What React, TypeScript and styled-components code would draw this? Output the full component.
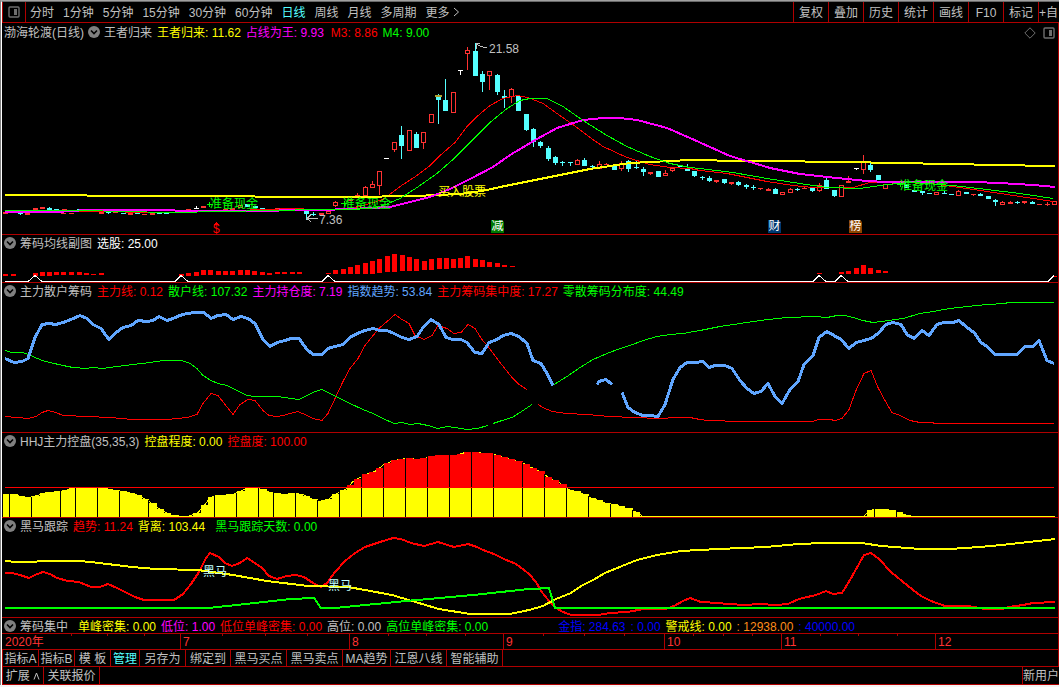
import React from "react";
import styled, { createGlobalStyle, css } from "styled-components";

const C = {
  line: "#b00000",
  text: "#c0c0c0",
  white: "#ffffff",
  red: "#ff0000",
  candle: "#ff3232",
  cyan: "#54ffff",
  green: "#00ff00",
  yellow: "#ffff00",
  magenta: "#ff00ff",
  blue: "#60a6ff",
  deep: "#0000ff",
  orange: "#ff8c1a",
  dim: "#6e6e6e",
};

const GlobalStyle = createGlobalStyle`
  * { box-sizing: border-box; }
  body { margin: 0; background: #f4f4f4; }
  button { font: inherit; color: inherit; background: none; border: 0; padding: 0; cursor: pointer; }
`;

const Frame = styled.div`
  border-top: 1px solid #a0a0a0;
  border-left: 1px solid #808080;
  overflow: hidden;
  font: 12px/16px "Liberation Sans", "Noto Sans CJK SC", sans-serif;
  color: ${C.text};
`;

const Screen = styled.div`
  border-top: 1px solid #696969;
  border-left: 1px solid #ffffff;
  background: #000;
`;

const Toolbar = styled.nav`
  display: flex;
  height: 21px;
  border-left: 1px solid ${C.line};
  border-bottom: 1px solid ${C.line};
  overflow: hidden;
`;

const LayoutButton = styled.button`
  flex: none;
  width: 23px;
  border-right: 1px solid ${C.line};
  display: flex;
  align-items: center;
  justify-content: center;
`;

const Periods = styled.div`
  flex: 1;
  display: flex;
  gap: 9px;
  padding-left: 4px;
  overflow: hidden;
`;

const PeriodButton = styled.button<{ $active?: boolean }>`
  padding-top: 2px;
  white-space: nowrap;
  color: ${(p) => (p.$active ? C.cyan : C.text)};
`;

const Tools = styled.div`
  display: flex;
  flex: none;
`;

const ToolButton = styled.button<{ $narrow?: boolean }>`
  width: ${(p) => (p.$narrow ? 21 : 35)}px;
  padding-top: 2px;
  border-left: 1px solid ${C.line};
  white-space: nowrap;
  overflow: hidden;
  ${(p) => p.$narrow && css`text-align: left;`}
`;

const Panels = styled.main`
  border-right: 1px solid ${C.line};
`;

const Panel = styled.section`
  border-bottom: 1px solid ${C.line};
`;

const PanelHeader = styled.header<{ $tall?: boolean }>`
  display: flex;
  align-items: center;
  height: ${(p) => (p.$tall ? 18 : 16)}px;
  padding: 0 3px 0 2px;
  gap: 5px;
  white-space: nowrap;
  overflow: hidden;
`;

const PanelTitle = styled.div`
  display: flex;
  align-items: center;
  gap: 4px;
`;

const Label = styled.span`
  padding-top: 2px;
`;

const Collapse = styled.button`
  display: flex;
  width: 12px;
  height: 12px;
`;

const Reading = styled(Label)<{ $color: string; $before?: number }>`
  color: ${(p) => p.$color};
  margin-left: ${(p) => p.$before ?? 0}px;
`;

const HeaderIcons = styled.div`
  display: flex;
  gap: 7px;
  margin-left: auto;
  padding-top: 1px;
`;

const IconButton = styled.button`
  display: flex;
`;

const ChartArea = styled.div`
  position: relative;
`;

const Chart = styled.svg<{ $height: number }>`
  display: block;
  width: 100%;
  height: ${(p) => p.$height}px;
  shape-rendering: crispEdges;
`;

const Mark = styled.span<{ $x: number; $y: number; $color: string }>`
  position: absolute;
  left: ${(p) => ((p.$x - 2) / 1056) * 100}%;
  top: ${(p) => p.$y}px;
  color: ${(p) => p.$color};
  line-height: 14px;
  white-space: nowrap;
`;

const Badge = styled(Mark)<{ $bg: string }>`
  width: 13px;
  height: 13px;
  line-height: 13px;
  text-align: center;
  background: ${(p) => p.$bg};
  clip-path: polygon(0 0, 11px 0, 13px 2px, 13px 13px, 0 13px);
`;

const Axis = styled.div`
  position: relative;
  display: grid;
  grid-template-columns: 178fr 169fr 154fr 161fr 117fr 154fr 123fr;
  height: 16px;
  border-bottom: 1px solid ${C.line};
  color: ${C.candle};
`;

const Month = styled.span`
  border-left: 1px solid ${C.line};
  padding-left: 2px;
  &:first-child { border-left: 0; padding-left: 3px; }
`;

const Ticks = styled.svg`
  position: absolute;
  inset: 0;
  width: 100%;
  height: 2px;
  shape-rendering: crispEdges;
`;

const Bar = styled.div<{ $height: number }>`
  display: flex;
  height: ${(p) => p.$height}px;
  border-bottom: 1px solid ${C.line};
  overflow: hidden;
`;

const Tab = styled.button<{ $width: number; $active?: boolean }>`
  flex: none;
  width: ${(p) => p.$width}px;
  padding-top: 1px;
  border-left: 1px solid ${C.line};
  white-space: nowrap;
  overflow: hidden;
  color: ${(p) => (p.$active ? C.cyan : C.text)};
`;

const TabEnd = styled.div`
  border-left: 1px solid ${C.line};
  flex: 1;
`;

type Pt = [number, number];

/* Section scaling: values are recorded on an enlarged grid and mapped back to plot units. */
const place = (ox: number, oy: number, pts: Pt[], sx = 3): Pt[] =>
  pts.map(([x, y]) => [Math.round(ox + x / sx), Math.round(oy + y / 3)]);

const WIDE = 2.958;

const Curve = ({ pts, color, w = 1 }: { pts: Pt[]; color: string; w?: number }) => (
  <polyline
    points={pts.map(([x, y]) => `${x},${w % 2 ? y + 0.5 : y}`).join(" ")}
    fill="none"
    stroke={color}
    strokeWidth={w}
    strokeLinejoin="round"
    vectorEffect="non-scaling-stroke"
  />
);

/* ---------- price chart ---------- */

const priceYellow: Pt[] = [
  [5, 195], [86, 195], [88, 196], [254, 196], [256, 197], [350, 197], [415, 196], [437, 195], [460, 194], [475, 192],
  [487, 190], [500, 187], [515, 184], [530, 181], [550, 177], [570, 173], [590, 169], [610, 166], [630, 163], [650, 162],
  [670, 161], [690, 160], [716, 160], [718, 161], [804, 161], [806, 162], [870, 162], [872, 163], [922, 163], [924, 164],
  [973, 164], [975, 165], [1024, 165], [1026, 166], [1055, 166],
];
const priceMagenta: Pt[] = [
  [5, 212], [57, 212], [86, 210], [174, 210], [176, 211], [240, 211], [320, 210], [350, 209], [370, 208], [390, 207],
  [410, 202], [430, 197], [450, 189], [470, 179], [493, 167], [510, 155], [537, 139], [557, 128], [570, 124], [583, 120],
  [603, 118], [620, 118], [637, 120], [667, 128], [690, 138], [710, 147], [730, 156], [750, 162], [770, 168], [800, 174],
  [827, 177], [867, 181], [887, 182], [933, 182], [973, 182], [1000, 183], [1033, 185], [1055, 187],
];
const priceRed: Pt[] = [
  [5, 211], [100, 211], [150, 212], [222, 211], [240, 210], [260, 209], [300, 208], [315, 210], [330, 210], [350, 208],
  [363, 205], [383, 199], [400, 186], [417, 175], [430, 165], [440, 155], [455, 142], [467, 126], [477, 116], [490, 105],
  [503, 98], [517, 95], [528, 97], [543, 103], [557, 113], [577, 127], [590, 137], [603, 146], [627, 157], [650, 164],
  [670, 167], [690, 168], [700, 170], [727, 173], [767, 181], [793, 185], [813, 187], [853, 187], [870, 182], [900, 182],
  [930, 183], [967, 188], [1007, 194], [1053, 201],
];
const priceGreen: Pt[] = [
  [5, 210], [86, 210], [120, 211], [174, 212], [222, 211], [320, 209], [350, 209], [370, 208], [383, 205], [400, 198],
  [417, 187], [437, 173], [453, 159], [470, 142], [490, 122], [507, 108], [520, 100], [530, 98], [547, 98], [563, 106],
  [583, 120], [607, 135], [627, 146], [650, 156], [670, 163], [690, 167], [700, 168], [733, 172], [767, 178], [800, 183],
  [827, 187], [860, 188], [887, 184], [913, 182], [953, 185], [987, 189], [1020, 193], [1053, 198],
];

/* kind, x, body top, body bottom, high, low — r hollow up, R solid up, c down, w flat */
type Candle = [string, number, number, number, number?, number?];

const candlesA: Candle[] = [
  ["R", 16, 247, 251], ["R", 31, 247, 250], ["c", 61, 250, 253, 250, 256], ["R", 82, 250, 254], ["r", 106, 235, 240],
  ["R", 127, 232, 236], ["c", 148, 234, 241, 231], ["c", 170, 237, 240], ["R", 193, 237, 240], ["R", 190, 249, 253],
  ["R", 213, 249, 252], ["c", 238, 237, 240], ["r", 304, 246, 253], ["c", 325, 246, 249, 246, 252],
  ["R", 346, 245, 250], ["c", 370, 250, 253], ["R", 391, 249, 254], ["c", 412, 250, 253], ["R", 432, 251, 254],
  ["R", 457, 249, 254], ["c", 478, 249, 252], ["c", 499, 249, 252], ["c", 520, 246, 249], ["R", 565, 237, 240],
  ["w", 588, 234, 237, 228], ["r", 610, 227, 235], ["R", 675, 237, 241], ["R", 698, 234, 240], ["r", 720, 226, 235],
  ["c", 742, 222, 232], ["c", 765, 229, 235], ["c", 787, 235, 238], ["R", 832, 235, 238], ["R", 853, 234, 237],
  ["R", 875, 234, 237], ["R", 895, 235, 238], ["c", 919, 243, 252, 243, 270], ["c", 940, 252, 255, 247, 259],
  ["r", 964, 248, 256], ["r", 985, 243, 251], ["r", 1006, 216, 227, 212, 231], ["r", 1050, 206, 214],
  ["R", 1072, 195, 198, 189, 202],
];
const candlesB: Candle[] = [
  ["r", 46, 471, 497, 468], ["r", 67, 462, 473, 453], ["r", 88, 423, 467, 423, 495], ["w", 110, 384, 387],
  ["r", 134, 336, 360, 336, 365], ["c", 154, 315, 348, 288, 387], ["r", 178, 300, 362], ["c", 199, 312, 353, 306],
  ["r", 220, 306, 339, 306, 357], ["r", 245, 252, 278], ["c", 265, 198, 210, 192, 282], ["c", 286, 210, 242, 147],
  ["r", 310, 186, 248], ["w", 330, 120, 123, 120, 135], ["r", 352, 60, 72, 51, 120], ["c", 376, 63, 138, 39],
  ["c", 397, 132, 156, 123, 186], ["r", 418, 123, 138, 123, 180], ["c", 442, 135, 186, 132, 195],
  ["c", 463, 198, 204, 180, 234], ["r", 484, 177, 200, 174, 218], ["c", 505, 198, 243], ["c", 529, 252, 300, 252, 303],
  ["c", 550, 297, 336, 294, 350], ["c", 571, 336, 347, 333, 354], ["c", 595, 354, 387, 348, 392],
  ["c", 616, 381, 399, 378, 404], ["c", 637, 397, 400, 393, 407], ["c", 661, 396, 399, 396, 408],
  ["r", 682, 391, 404, 386], ["c", 703, 390, 408, 384], ["c", 727, 407, 412, 405, 418], ["r", 748, 402, 416, 393],
  ["R", 769, 402, 405, 399], ["c", 793, 408, 420], ["r", 814, 400, 416, 394, 423], ["c", 835, 393, 417, 390, 425],
  ["c", 858, 411, 414, 390, 417], ["c", 880, 417, 426, 411, 437], ["R", 901, 426, 432, 426, 435],
  ["c", 925, 423, 441], ["r", 946, 428, 438, 420], ["r", 967, 414, 423, 414, 426], ["c", 991, 409, 412],
  ["c", 1012, 414, 423, 402], ["c", 1033, 423, 438, 423, 441],
];
const candlesC: Candle[] = [
  ["c", 7, 141, 144, 137, 149], ["c", 28, 144, 153, 138, 156], ["R", 49, 150, 155, 150, 159], ["c", 73, 147, 159, 147, 162],
  ["R", 94, 156, 161, 156, 165], ["c", 115, 156, 164, 153, 168], ["c", 139, 165, 170, 162, 176],
  ["c", 160, 171, 174, 165, 180], ["R", 181, 174, 177, 174, 180], ["R", 205, 177, 183, 174], ["c", 226, 177, 192, 174],
  ["r", 247, 186, 195], ["r", 271, 177, 189, 174], ["c", 292, 177, 180, 174, 183], ["R", 313, 174, 177, 168],
  ["c", 337, 173, 183, 173, 186], ["r", 358, 166, 182, 160, 186], ["c", 379, 150, 177, 140], ["c", 403, 180, 198, 180, 201],
  ["r", 424, 166, 200], ["R", 445, 153, 158, 138], ["w", 468, 114, 117, 114, 120], ["r", 490, 96, 120, 75, 132],
  ["c", 511, 105, 120, 99, 126], ["c", 535, 135, 150], ["r", 556, 162, 177], ["R", 577, 157, 160, 154, 165],
  ["c", 620, 162, 174], ["c", 643, 180, 185], ["c", 667, 183, 189, 183, 194], ["c", 688, 189, 192], ["r", 709, 186, 195],
  ["c", 733, 189, 192, 183], ["c", 754, 192, 195], ["r", 775, 183, 198, 180], ["c", 799, 186, 192], ["R", 820, 192, 195, 192, 198],
  ["c", 841, 192, 198, 189], ["c", 865, 198, 207], ["c", 886, 210, 215, 207, 228], ["r", 907, 216, 225, 213],
  ["R", 931, 216, 221, 213], ["c", 952, 216, 219, 213, 222], ["R", 973, 213, 219, 213, 222], ["c", 997, 216, 222, 213],
  ["R", 1017, 222, 225], ["R", 1042, 222, 225, 216, 228], ["r", 1063, 213, 225],
];

const Candles = ({ ox, oy, data }: { ox: number; oy: number; data: Candle[] }) => (
  <g>
    {data.map(([k, cx, t, b, hi = t, lo = b], i) => {
      const x = Math.round(ox + (cx - 1.5) / 3);
      const [top, bot, h, l] = [t, b, hi, lo].map((v) => Math.round(oy + v / 3));
      const color = k === "c" ? C.cyan : k === "w" ? C.white : C.candle;
      const bh = Math.max(1, bot - top);
      return (
        <g key={i} fill={color}>
          {h < top && <rect x={x} y={h} width={1} height={top - h} />}
          {l > bot && <rect x={x} y={bot} width={1} height={l - bot} />}
          {k === "r" && bh > 2 ? (
            <rect x={x - 1.5} y={top + 0.5} width={4} height={bh - 1} fill="none" stroke={color} />
          ) : (
            <rect x={x - 2} y={top} width={5} height={bh} />
          )}
        </g>
      );
    })}
  </g>
);

/* ---------- chip histogram ---------- */

const histA: [number, number, number][] = [
  [16, 432, 438], [40, 432, 438], [106, 430, 438], [127, 426, 438], [148, 426, 438], [169, 427, 436], [190, 426, 435],
  [213, 426, 435], [238, 426, 435], [259, 429, 435], [280, 432, 435], [304, 429, 435], [544, 433, 438], [565, 430, 438],
  [589, 426, 438], [610, 420, 435], [631, 420, 435], [655, 423, 435], [676, 423, 435], [697, 423, 435], [721, 420, 435],
  [742, 420, 435], [763, 423, 435], [787, 426, 435], [808, 429, 435], [832, 426, 432], [853, 426, 432], [877, 426, 432],
  [898, 426, 432], [985, 429, 432], [1006, 420, 432], [1030, 417, 432], [1051, 411, 432], [1072, 405, 432],
  [1096, 399, 432], [1117, 393, 432], [1138, 387, 429], [1162, 378, 426], [1183, 372, 426], [1207, 375, 423],
  [1228, 381, 423], [1249, 387, 423], [1271, 393, 420], [1294, 387, 420], [1316, 384, 417], [1337, 384, 417],
  [1360, 387, 414], [1381, 384, 414], [1402, 378, 414], [1426, 387, 411], [1447, 390, 411], [1468, 396, 411],
  [1492, 399, 411], [1513, 405, 411], [1537, 408, 411], [2458, 429, 432], [2524, 426, 432], [2545, 423, 432],
  [2569, 414, 432], [2590, 405, 432], [2611, 414, 432], [2635, 420, 429], [2656, 423, 429], [3163, 438, 441],
];
const chipBase: Pt[] = [
  [5, 281], [28, 281], [35, 275], [42, 281], [175, 281], [181, 275], [188, 281], [322, 281], [328, 275], [335, 281],
  [813, 281], [819, 275], [826, 281], [835, 281], [841, 275], [848, 281], [1048, 281], [1054, 275],
];

/* ---------- main force / retail ---------- */

const trend1: Pt[] = [
  ...place(0, 280, [
    [15, 235], [42, 247], [65, 243], [84, 234], [104, 172], [125, 133], [148, 129], [168, 133], [190, 126], [213, 118],
    [240, 105], [260, 113], [280, 133], [303, 145], [326, 176], [345, 158], [370, 142], [392, 136], [413, 121], [440, 124],
    [460, 120], [478, 109], [500, 121], [520, 115], [540, 104], [560, 100], [585, 97], [611, 97], [632, 113], [655, 106],
    [678, 103], [698, 116], [722, 109], [745, 113], [766, 130], [788, 178], [811, 199], [832, 187], [855, 180], [872, 173],
    [898, 173], [920, 208], [940, 223], [965, 223], [985, 205], [1005, 198], [1028, 191], [1050, 171],
  ]),
  ...place(350, 280, [
    [20, 158], [45, 151], [68, 145], [90, 151], [112, 149], [132, 160], [155, 172], [178, 178], [200, 169], [220, 140],
    [244, 118], [267, 133], [288, 170], [310, 178], [333, 178], [352, 187], [376, 215], [397, 220], [418, 187], [442, 178],
    [460, 164], [482, 159], [508, 169], [530, 190], [550, 240], [572, 250], [590, 280], [610, 314],
  ]),
];
const trend2 = place(350, 280, [[740, 313], [748, 303], [768, 297], [786, 313]]);
const trend3: Pt[] = [
  ...place(350, 280, [
    [817, 337], [835, 380], [855, 395], [878, 405], [900, 406], [924, 409], [946, 373], [968, 298], [990, 260],
    [1012, 247], [1035, 247],
  ]),
  ...place(700, 280, [
    [10, 243], [28, 260], [45, 256], [75, 256], [95, 265], [120, 300], [140, 325], [163, 338], [182, 333], [204, 310],
    [225, 347], [247, 368], [270, 328], [293, 304], [312, 252], [340, 225], [358, 170], [380, 154], [402, 166], [424, 176],
    [446, 205], [468, 185], [492, 181], [512, 175], [535, 158], [558, 133], [580, 127], [602, 132], [622, 163], [643, 175],
    [667, 151], [688, 166], [710, 133], [733, 125], [760, 125], [776, 121], [800, 140], [822, 157], [843, 185], [862, 197],
    [886, 223], [950, 223], [975, 199], [1000, 199], [1018, 181], [1042, 240], [1063, 248],
  ]),
];
const retail1: Pt[] = [
  ...place(0, 280, [
    [15, 211], [35, 217], [70, 217], [100, 228], [125, 240], [150, 245], [190, 256], [220, 260], [258, 265], [280, 262],
    [310, 265], [350, 259], [400, 252], [450, 245], [490, 239], [547, 239], [570, 250], [590, 263], [610, 285], [632, 301],
    [655, 308], [680, 315], [710, 330], [740, 345], [765, 349], [800, 347], [830, 349], [898, 358], [920, 345], [945, 333],
    [965, 327], [985, 335], [1020, 354], [1050, 370],
  ]),
  ...place(350, 280, [
    [40, 388], [70, 399], [100, 415], [133, 430], [155, 427], [180, 433], [205, 430], [235, 436], [265, 444], [290, 439],
    [315, 440], [352, 448], [380, 444], [415, 435],
  ]),
];
const retail2 = place(350, 280, [[430, 430], [455, 420], [485, 410], [510, 397], [545, 373]]);
const retail3: Pt[] = [
  ...place(350, 280, [
    [613, 312], [650, 287], [690, 260], [730, 237], [770, 218], [810, 205], [840, 194], [880, 180], [920, 169],
    [960, 161], [1000, 159],
  ]),
  ...place(700, 280, [
    [0, 149], [60, 137], [120, 129], [180, 121], [260, 110], [345, 107], [380, 110], [410, 106], [435, 106], [460, 112],
    [490, 121], [520, 125], [545, 123], [610, 114], [660, 100], [700, 92], [750, 84], [800, 79], [860, 71], [915, 70],
    [925, 67], [1061, 67],
  ]),
];
const force1: Pt[] = [
  ...place(0, 280, [
    [15, 409], [50, 412], [85, 415], [108, 408], [125, 396], [145, 391], [168, 396], [190, 406], [265, 407], [330, 411],
    [400, 417], [500, 418], [560, 412], [590, 403], [610, 370], [632, 340], [655, 346], [675, 373], [698, 403], [720, 372],
    [745, 358], [766, 359], [788, 390], [808, 405], [830, 409], [850, 405], [870, 399], [895, 394], [920, 405], [940, 415],
    [965, 421], [985, 400], [1005, 355], [1030, 303], [1050, 263],
  ]),
  ...place(350, 280, [
    [25, 235], [45, 195], [70, 165], [90, 140], [112, 122], [135, 103], [155, 118], [178, 130], [195, 165], [222, 176],
    [245, 166], [265, 136], [290, 144], [312, 160], [333, 157], [353, 133], [376, 143], [397, 178], [415, 198], [450, 245],
    [485, 292], [508, 312], [530, 328],
  ]),
];
const force2: Pt[] = [
  ...place(350, 280, [
    [565, 373], [580, 382], [605, 393], [650, 399], [710, 402], [780, 407], [850, 411], [930, 415], [980, 412], [1020, 412],
  ]),
  ...place(700, 280, [
    [0, 418], [20, 421], [125, 422], [135, 424], [340, 424], [355, 418], [390, 418], [405, 421], [425, 414], [446, 387],
    [468, 330], [492, 280], [512, 269], [535, 320], [555, 360], [577, 396], [600, 405], [630, 421], [660, 426], [695, 427],
    [705, 430], [1061, 430],
  ]),
];

/* ---------- control degree ---------- */

const control: Pt[] = [
  ...place(0, 430, [
    [9, 192], [40, 192], [62, 198], [85, 201], [110, 195], [140, 186], [180, 182], [220, 175], [245, 173], [285, 175],
    [310, 174], [340, 179], [380, 187], [410, 194], [440, 213], [470, 235], [500, 252], [520, 259], [555, 259], [585, 245],
    [605, 222], [620, 201], [650, 196], [690, 192], [715, 180], [735, 172], [765, 174], [790, 182], [815, 189], [840, 191],
    [870, 189], [895, 192], [920, 205], [945, 213], [970, 206], [990, 192], [1025, 174], [1045, 153], [1080, 133],
    [1110, 122], [1135, 102], [1165, 89], [1200, 85], [1245, 87], [1275, 78], [1310, 75], [1350, 74], [1375, 67],
    [1410, 66], [1460, 72], [1490, 80], [1520, 89], [1550, 100],
  ], WIDE),
  ...place(529, 430, [
    [0, 108], [20, 117], [42, 130], [62, 143], [88, 157], [108, 170], [115, 176], [150, 187], [180, 202], [220, 215],
    [260, 226], [300, 238], [325, 248], [337, 258], [990, 258], [1002, 243], [1020, 238], [1060, 238], [1085, 242],
    [1110, 252], [1130, 258], [1553, 258],
  ], WIDE),
];
const valueAt = (pts: Pt[], x: number) => {
  for (let i = 1; i < pts.length; i++) {
    const [x0, y0] = pts[i - 1];
    const [x1, y1] = pts[i];
    if (x <= x1) return x1 === x0 ? y1 : y0 + ((y1 - y0) * Math.max(0, x - x0)) / (x1 - x0);
  }
  return pts[pts.length - 1][1];
};
const controlBars = Array.from({ length: 144 }, (_, i) => {
  const x = Math.round(3 + i * 7.32);
  return { x, w: Math.min(1055, Math.round(3 + (i + 1) * 7.32)) - x, y: Math.round(valueAt(control, x + 3)) };
});
const gaps = [
  9, 31, 60, 75, 97, 119, 148, 214, 236, 258, 273, 295, 317, 339, 361, 383, 405, 427, 449, 471, 493, 522, 544, 566, 588,
  610, 632, 874, 896,
];

/* ---------- dark horse ---------- */

const horseRed: Pt[] = [
  ...place(0, 430, [
    [15, 429], [35, 429], [60, 436], [85, 444], [105, 436], [126, 427], [148, 432], [170, 445], [200, 453], [235, 457],
    [270, 471], [295, 470], [320, 463], [345, 473], [370, 487], [400, 500], [425, 510], [515, 510], [540, 493], [565, 462],
    [590, 427], [608, 385], [622, 370], [648, 380], [665, 398], [687, 408], [710, 400], [732, 385], [755, 398], [775, 415],
    [795, 437], [820, 447], [850, 438], [875, 434], [900, 442], [925, 460], [950, 470], [968, 460], [990, 425], [1020, 392],
    [1050, 368], [1080, 350], [1125, 337], [1162, 323], [1185, 326], [1215, 340], [1255, 349], [1297, 337], [1342, 352],
    [1384, 341], [1410, 350], [1430, 361], [1460, 372], [1490, 386], [1525, 402], [1550, 420],
  ], WIDE),
  ...place(529, 430, [
    [0, 432], [20, 455], [35, 483], [60, 513], [80, 533], [100, 547], [125, 555], [205, 554], [240, 548], [290, 545],
    [340, 538], [405, 537], [430, 527], [455, 512], [475, 505], [510, 515], [560, 518], [590, 522], [640, 525], [680, 521],
    [730, 525], [765, 523], [800, 508], [850, 494], [880, 484], [900, 492], [925, 490], [950, 450], [990, 376],
    [1012, 370], [1035, 387], [1070, 425], [1120, 467], [1160, 497], [1190, 514], [1230, 527], [1300, 528], [1350, 537],
    [1400, 537], [1420, 531], [1460, 526], [1490, 519], [1556, 516],
  ], WIDE),
];
const horseYellow: Pt[] = [
  ...place(0, 430, [
    [15, 393], [50, 396], [95, 396], [125, 393], [235, 393], [270, 397], [390, 412], [460, 418], [585, 421], [690, 434],
    [790, 454], [910, 467], [1030, 470], [1080, 480], [1160, 495], [1220, 514], [1300, 536], [1390, 552], [1510, 551],
  ], WIDE),
  ...place(529, 430, [
    [0, 540], [40, 527], [80, 508], [125, 490], [155, 468], [190, 449], [225, 428], [275, 407], [320, 390], [380, 374],
    [450, 363], [560, 357], [700, 350], [800, 343], [870, 339], [985, 339], [1040, 347], [1160, 356], [1245, 356],
    [1330, 352], [1400, 346], [1480, 335], [1556, 326],
  ], WIDE),
];
const horseGreen: Pt[] = [
  ...place(0, 430, [[15, 534], [615, 534], [700, 524], [860, 508], [928, 503], [950, 534], [990, 533], [1200, 512], [1400, 494]], WIDE),
  ...place(529, 430, [[0, 477], [30, 477], [38, 473], [58, 473], [78, 534], [1556, 534]], WIDE),
];

const minorTicks = [71, 107, 144, 222, 265, 307, 388, 426, 465, 543, 584, 624, 693, 723, 752, 820, 858, 897];

const SideIcon = () => (
  <svg width="12" height="12" viewBox="0 0 12 12" aria-hidden="true">
    <rect x="1" y="1" width="10" height="10" rx="1" fill="none" stroke={C.dim} strokeWidth="1.4" />
    <rect x="6" y="3" width="3" height="6" fill={C.dim} />
  </svg>
);

type ReadingData = [string, string, number?];

const Head = ({ title, readings, tall, lead }: { title: string; readings: ReadingData[]; tall?: boolean; lead?: string }) => (
  <PanelHeader $tall={tall}>
    <PanelTitle>
      {lead && <Label>{lead}</Label>}
      <Collapse aria-label={`折叠 ${title}`}>
        <svg width="12" height="12" viewBox="0 0 12 12" aria-hidden="true">
          <circle cx="6" cy="6" r="6" fill="#808080" />
          <path d="M3 4.5 6 7.5 9 4.5" fill="none" stroke="#000" strokeWidth="1.6" />
        </svg>
      </Collapse>
      <Label>{title}</Label>
    </PanelTitle>
    {readings.map(([text, color, before], i) => (
      <Reading key={i} $color={color} $before={before}>{text}</Reading>
    ))}
    {tall && (
      <HeaderIcons>
        <IconButton aria-label="标记点">
          <svg width="12" height="12" viewBox="0 0 12 12" aria-hidden="true">
            <path d="M6 .8 11.2 6 6 11.2 .8 6Z" fill="none" stroke={C.dim} />
          </svg>
        </IconButton>
        <IconButton aria-label="侧栏"><SideIcon /></IconButton>
      </HeaderIcons>
    )}
  </PanelHeader>
);

const Plot = ({ top, height, children }: { top: number; height: number; children: React.ReactNode }) => (
  <Chart $height={height} viewBox={`2 ${top} 1056 ${height}`} preserveAspectRatio="none" aria-hidden="true">
    {children}
  </Chart>
);

const CompactBox = styled.div`
  height: 15px;
  overflow: hidden;
`;

const periods = ["分时", "1分钟", "5分钟", "15分钟", "30分钟", "60分钟", "日线", "周线", "月线", "多周期"];
const tools = ["复权", "叠加", "历史", "统计", "画线", "F10", "标记"];
const tabs: [string, number][] = [
  ["指标A", 36], ["指标B", 36], ["模 板", 36], ["管理", 29], ["另存为", 46], ["绑定到", 45], ["黑马买点", 56],
  ["黑马卖点", 56], ["MA趋势", 48], ["江恩八线", 56], ["智能辅助", 56],
];

export default function App() {
  return (
    <Frame>
      <GlobalStyle />
      <Screen>
        <Toolbar>
          <LayoutButton aria-label="布局"><SideIcon /></LayoutButton>
          <Periods>
            {periods.map((p) => <PeriodButton key={p} $active={p === "日线"}>{p}</PeriodButton>)}
            <PeriodButton>
              更多{" "}
              <svg width="7" height="10" viewBox="0 0 7 10" aria-hidden="true">
                <path d="M1 1 5.5 5 1 9" fill="none" stroke={C.text} />
              </svg>
            </PeriodButton>
          </Periods>
          <Tools>
            {tools.map((t) => <ToolButton key={t}>{t}</ToolButton>)}
            <ToolButton $narrow>+自</ToolButton>
          </Tools>
        </Toolbar>

        <Panels>
          <Panel>
            <Head
              tall
              lead="渤海轮渡(日线)"
              title="王者归来"
              readings={[
                ["王者归来: 11.62", C.yellow], ["占线为王: 9.93", C.magenta], ["M3: 8.86", C.red, 2], ["M4: 9.00", C.green],
              ]}
            />
            <ChartArea>
              <Plot top={41} height={193}>
                <Candles ox={0} oy={130} data={candlesA} />
                <Candles ox={350} oy={30} data={candlesB} />
                <Candles ox={700} oy={130} data={candlesC} />
                <rect x="435" y="95" width="7" height="2" fill="#b0a030" />
                <Curve pts={priceRed} color={C.red} />
                <Curve pts={priceYellow} color={C.yellow} w={2} />
                <Curve pts={priceMagenta} color={C.magenta} w={2} />
                <Curve pts={priceGreen} color={C.green} />
                <path d="M476.500 49V43.500H480M477 44.500 481 46.500 487 48" fill="none" stroke={C.text} />
                <path d="M318 218.500H307M311 214.500 307 218.500 311 222" fill="none" stroke={C.text} />
                <path d="M207 204.500H213M209.500 202V207M341 203.500H347M344.500 201V206M897 184.500H903M900.500 182V187" stroke={C.green} />
                <path d="M214 224.500 216.500 222 219 224.500Z" fill={C.red} />
              </Plot>
              <Mark $x={210} $y={156} $color={C.green}>准备现金</Mark>
              <Mark $x={343} $y={156} $color={C.green}>准备现金</Mark>
              <Mark $x={900} $y={138} $color={C.green}>准备现金</Mark>
              <Mark $x={438} $y={144} $color={C.yellow}>买入股票</Mark>
              <Mark $x={489} $y={1} $color={C.text}>21.58</Mark>
              <Mark $x={319} $y={172} $color={C.text}>7.36</Mark>
              <Mark $x={213} $y={181} $color={C.red}>$</Mark>
              <Badge $x={491} $y={179} $color={C.white} $bg="#007800">减</Badge>
              <Badge $x={768} $y={179} $color={C.white} $bg="#003870">财</Badge>
              <Badge $x={849} $y={179} $color={C.white} $bg="#8c4600">榜</Badge>
            </ChartArea>
          </Panel>

          <Panel>
            <Head title="筹码均线副图" readings={[["选股: 25.00", C.white]]} />
            <Plot top={251} height={31}>
              {histA.map(([x, t, b], i) => (
                <rect
                  key={i}
                  x={Math.round(x / 3) - 2}
                  y={Math.round(130 + t / 3)}
                  width={5}
                  height={Math.max(1, Math.round((b - t) / 3))}
                  fill={C.red}
                />
              ))}
              <Curve pts={chipBase} color={C.white} />
            </Plot>
          </Panel>

          <Panel>
            <Head
              title="主力散户筹码"
              readings={[
                ["主力线: 0.12", C.red], ["散户线: 107.32", C.green], ["主力持仓度: 7.19", C.magenta],
                ["指数趋势: 53.84", C.blue], ["主力筹码集中度: 17.27", C.red], ["零散筹码分布度: 44.49", C.green],
              ]}
            />
            <Plot top={299} height={133}>
              <Curve pts={force1} color={C.red} />
              <Curve pts={force2} color={C.red} />
              <Curve pts={retail1} color={C.green} />
              <Curve pts={retail2} color={C.green} />
              <Curve pts={retail3} color={C.green} />
              <Curve pts={trend1} color={C.blue} w={3} />
              <Curve pts={trend2} color={C.blue} w={3} />
              <Curve pts={trend3} color={C.blue} w={3} />
            </Plot>
          </Panel>

          <Panel>
            <Head title="HHJ主力控盘(35,35,3)" readings={[["控盘程度: 0.00", C.yellow], ["控盘度: 100.00", C.red]]} />
            <Plot top={449} height={68}>
              <Curve pts={control} color={C.yellow} />
              {controlBars.map((b) => (
                <g key={b.x}>
                  {b.y < 487 && <rect x={b.x} y={b.y} width={b.w} height={488 - b.y} fill={C.red} />}
                  <rect x={b.x} y={Math.max(488, b.y)} width={b.w} height={517 - Math.max(488, b.y)} fill={C.yellow} />
                </g>
              ))}
              {gaps.map((x) => {
                const y = Math.round(valueAt(control, x));
                return <rect key={x} x={x} y={y} width={1} height={517 - y} fill="#000" />;
              })}
              <rect x="5" y="487" width="1049" height="1" fill={C.red} />
            </Plot>
          </Panel>

          <Panel>
            <Head
              title="黑马跟踪"
              readings={[["趋势: 11.24", C.red], ["背离: 103.44", C.yellow], ["黑马跟踪天数: 0.00", C.green, 5]]}
            />
            <ChartArea>
              <Plot top={534} height={83}>
                <Curve pts={horseRed} color={C.red} w={2} />
                <Curve pts={horseYellow} color={C.yellow} w={2} />
                <Curve pts={horseGreen} color={C.green} w={2} />
              </Plot>
              <Mark $x={203} $y={31} $color="#c0ffff">黑马</Mark>
              <Mark $x={328} $y={45} $color="#c0ffff">黑马</Mark>
            </ChartArea>
          </Panel>

          <Panel>
            <CompactBox>
              <Head
                title="筹码集中"
                readings={[
                  ["单峰密集: 0.00", C.yellow, 5], ["低位: 1.00", C.magenta], ["低位单峰密集: 0.00", C.red],
                  ["高位: 0.00", C.text], ["高位单峰密集: 0.00", C.green], ["金指: 284.63", C.deep, 65],
                  [": 0.00", C.deep], ["警戒线: 0.00", C.yellow], [": 12938.00", C.orange], [": 40000.00", C.deep],
                ]}
              />
            </CompactBox>
          </Panel>

          <Axis>
            {["2020年", "7", "8", "9", "10", "11", "12"].map((m) => <Month key={m}>{m}</Month>)}
            <Ticks viewBox="2 0 1056 2" preserveAspectRatio="none" aria-hidden="true">
              {minorTicks.map((x) => <rect key={x} x={x} y={0} width={1} height={2} fill={C.line} />)}
            </Ticks>
          </Axis>
          <Bar $height={17}>
            {tabs.map(([t, w]) => <Tab key={t} $width={w} $active={t === "管理"}>{t}</Tab>)}
            <TabEnd />
          </Bar>
        </Panels>
        <Bar $height={18}>
          <Tab $width={41}>
            扩展{" "}
            <svg width="7" height="8" viewBox="0 0 7 8" aria-hidden="true">
              <path d="M1 7.500 3.500 1 6 7.500" fill="none" stroke={C.text} />
            </svg>
          </Tab>
          <Tab $width={56}>关联报价</Tab>
          <TabEnd />
          <Tab $width={37}>新用户</Tab>
        </Bar>
      </Screen>
    </Frame>
  );
}
